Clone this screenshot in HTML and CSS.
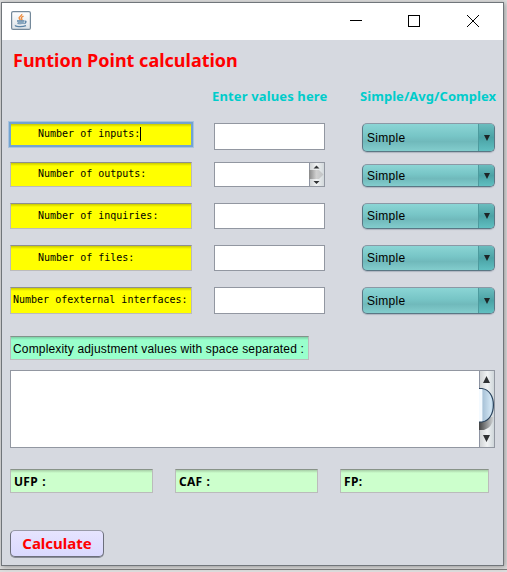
FILE: index.html
```html
<!DOCTYPE html>
<html lang="en">
<head>
<meta charset="utf-8">
<title>Funtion Point calculation</title>
<link rel="stylesheet" href="styles.css">
</head>
<body>
<main class="window">
  <header class="titlebar">
    <svg class="java" width="20" height="19" viewBox="0 0 20 19">
      <defs><linearGradient id="tile" x2="0" y2="1"><stop stop-color="#fff"/><stop offset="1" stop-color="#dce3e8"/></linearGradient></defs>
      <rect x=".6" y=".6" width="18.8" height="17.8" rx="1.5" fill="url(#tile)" stroke="#74899a" stroke-width="1.2"/>
      <path d="M10.8 3C11.5 5 7 5.5 8.2 7.5L9.5 9M12.5 5.2C9.5 6.5 10 7.2 11 8.2L10.5 9.5" fill="none" stroke="#ed8b3d" stroke-width="1.3"/>
      <path d="M6 10H13.5M6.5 12.2Q9.5 13.3 13 12M14 10.2Q16.2 10.3 13.5 12.7M4.5 14.2Q4 15 6 15.3Q11 16 15 14.6" fill="none" stroke="#5b84a6" stroke-width="1.3"/>
      <path d="M6.5 10.5H13L12 13H7.5Z" fill="#86a5bd"/>
    </svg>
    <svg class="controls" width="131" height="13" viewBox="0 0 131 13" fill="none" stroke="#000">
      <path d="M0 5.5H12"/><rect x="58.5" y=".5" width="11" height="11"/><path d="M117 0L129 12M129 0L117 12"/>
    </svg>
  </header>
  <section class="content">
    <h1>Funtion Point calculation</h1>
    <div class="grid">
      <h2 class="values">Enter values here</h2>
      <h2 class="levels">Simple/Avg/Complex</h2>

      <div class="label first focus">Number of inputs:<i class="caret"></i></div>
      <div class="input first"></div>
      <div class="combo"><span>Simple</span><b></b></div>

      <div class="label second">Number of outputs:</div>
      <div class="input scroll">
        <svg width="15" height="23" viewBox="0 0 15 23">
          <defs>
            <linearGradient id="track"><stop stop-color="#cdd0d2"/><stop offset=".5" stop-color="#f1f3f4"/><stop offset="1" stop-color="#d3d9dc"/></linearGradient>
            <linearGradient id="nub"><stop stop-color="#888"/><stop offset=".5" stop-color="#d0d0d0"/><stop offset="1" stop-color="#c0c3c5"/></linearGradient>
          </defs>
          <path fill="url(#track)" d="M0 0H15V23H0Z"/><path fill="#8e94a2" d="M0 0H1V23H0Z"/>
          <path d="M0 7H10L14.5 11.5L10 16H0Z" fill="url(#nub)"/>
          <path d="M7.5 2.5L10.5 5.5H4.5ZM4.5 18H10.5L7.5 21Z" fill="#303234"/>
        </svg>
      </div>
      <div class="combo short"><span>Simple</span><b></b></div>

      <div class="label low">Number of inquiries:</div>
      <div class="input"></div>
      <div class="combo"><span>Simple</span><b></b></div>

      <div class="label low">Number of files:</div>
      <div class="input"></div>
      <div class="combo"><span>Simple</span><b></b></div>

      <div class="label wide">Number ofexternal interfaces:</div>
      <div class="input tall"></div>
      <div class="combo tall"><span>Simple</span><b></b></div>
    </div>
    <div class="note">Complexity adjustment values with space separated :</div>
    <div class="area">
      <svg width="15" height="76" viewBox="0 0 15 76">
        <defs>
          <linearGradient id="rail"><stop stop-color="#cdd0d2"/><stop offset=".55" stop-color="#f1f3f4"/><stop offset="1" stop-color="#cfd6da"/></linearGradient>
          <linearGradient id="thumb"><stop stop-color="#f4faff"/><stop offset=".2" stop-color="#f4faff"/><stop offset=".27" stop-color="#a9c3d8"/><stop offset=".8" stop-color="#cfe3f2"/><stop offset="1" stop-color="#b8d4e8"/></linearGradient>
          <linearGradient id="shade"><stop stop-color="#444"/><stop offset="1" stop-color="#d5d8da"/></linearGradient>
        </defs>
        <path fill="url(#rail)" d="M0 0H15V76H0Z"/><path fill="#8e94a2" d="M0 0H1V76H0Z"/>
        <path d="M0 46H15Q13 57 5 59H0Z" fill="url(#shade)"/>
        <path d="M0 17.5H3C10 18.5 14.4 25 14.4 34S10 50 3 51H0Z" fill="url(#thumb)"/>
        <path d="M0 17.5H3C10 18.5 14.4 25 14.4 34S10 50 3 51H0" fill="none" stroke="#29425c" stroke-width="1.2"/>
        <path d="M7.5 5L11 12H4ZM4 64H11L7.5 71Z" fill="#303234"/>
      </svg>
    </div>
    <div class="results">
      <div class="result">UFP :</div>
      <div class="result">CAF :</div>
      <div class="result last">FP:</div>
    </div>
    <button class="calculate">Calculate</button>
  </section>
</main>
<div class="behind"></div>
</body>
</html>
```
FILE: styles.css
```css
* { box-sizing: border-box; }
body {
  margin: 0;
  width: 507px;
  height: 572px;
  overflow: hidden;
  padding: 2px 0 0 1px;
  background: #dedede;
}
.window {
  width: 503px;
  height: 564px;
  border: 1px solid #70757a;
  background: #d6d9e0;
  box-shadow: 1px 1px 5px #0005;
}
.titlebar {
  height: 37px;
  background: #fff;
  display: flex;
  justify-content: space-between;
  align-items: flex-start;
  padding: 8px 22px 0 9px;
}
.controls { margin-top: 4px; }
.content { padding: 0 8px; }
h1, h2, .result, .calculate {
  font-family: "Noto Sans", "DejaVu Sans", sans-serif;
  font-weight: bold;
}
h1 {
  margin: 0;
  padding: 8px 0 0 3px;
  height: 48px;
  font-size: 18px;
  line-height: 24px;
  color: #f00;
  white-space: nowrap;
}
.grid {
  display: grid;
  grid-template-columns: 204px 148px 133px;
  grid-template-rows: 35px 39px 41px 42px 42px 27px;
  align-items: start;
}
h2 { margin: 0; font-size: 13px; line-height: 17px; color: #00cccb; white-space: nowrap; }
.values { grid-column: 2; margin-left: -2px; letter-spacing: .14px; }
.levels { grid-column: 3; margin-left: -2px; letter-spacing: .05px; }
.label {
  width: 182px;
  height: 26px;
  padding-left: 27px;
  border: 1px solid #bbb;
  border-top-color: #8e8f91;
  background: linear-gradient(#c9c900, #ff0 3px);
  font: 10px/21px "DejaVu Sans Mono", monospace;
  white-space: pre;
  color: #000;
}
.label.second { height: 25px; }
.label.low { line-height: 23px; }
.label.wide { height: 27px; padding-left: 2px; line-height: 23px; }
.label.focus {
  height: 23px;
  line-height: 19px;
  border-color: #73a4d1;
  box-shadow: 0 0 0 1px #73a4d1, 0 0 0 2px #a9c3df;
}
.caret { display: inline-block; width: 1px; height: 14px; background: #000; vertical-align: -4px; }
.input {
  width: 111px;
  height: 26px;
  border: 1px solid #9297a1;
  background: #fff;
  display: flex;
  justify-content: flex-end;
}
.input.first, .input.tall { height: 27px; }
.input.scroll { height: 25px; }
.combo {
  width: 133px;
  height: 26px;
  border: 1px solid #5a7784;
  border-top-color: #8b98a5;
  border-radius: 5px;
  background: linear-gradient(#8bd5d5, #77c5c6 45%, #70b9bb 65%, #83cdcd);
  display: flex;
  align-items: center;
  overflow: hidden;
  box-shadow: 0 1px 1px #8a94a488;
  font: 12px "Liberation Sans", sans-serif;
}
.first + .combo { height: 29px; }
.combo.short { height: 23px; margin-top: 2px; }
.combo.tall { height: 27px; }
.combo span { flex: 1; padding-left: 4px; letter-spacing: .3px; }
.combo b {
  align-self: stretch;
  width: 16px;
  border-left: 1px solid #4d9b9e;
  background: linear-gradient(#6bbcbe, #4aa2a5 50%, #60bfc1);
  display: flex;
  align-items: center;
  justify-content: center;
}
.combo b::before { content: ""; border: 3.5px solid transparent; border-top: 6px solid #1d2526; border-bottom: 0; }
.note {
  width: 299px;
  height: 24px;
  margin-top: 22px;
  padding-left: 2px;
  border: 1px solid #bbb;
  border-top-color: #81938a;
  background: linear-gradient(#7dcfa6, #9fc 3px);
  font: 12px/24px "Liberation Sans", sans-serif;
  letter-spacing: .16px;
  white-space: nowrap;
}
.area {
  height: 78px;
  width: 485px;
  margin-top: 10px;
  border: 1px solid #9297a1;
  background: #fff;
  display: flex;
  justify-content: flex-end;
}
.results { display: flex; gap: 22px; margin-top: 21px; }
.result {
  width: 143px;
  height: 24px;
  padding-left: 3px;
  border: 1px solid #bbb;
  border-top-color: #889388;
  background: linear-gradient(#a6cea6, #cfc 3px);
  font-size: 12px;
  line-height: 23px;
  letter-spacing: .3px;
  word-spacing: .7px;
}
.result.last { width: 149px; }
.calculate {
  display: block;
  width: 94px;
  height: 27px;
  margin-top: 37px;
  padding: 0;
  border: 1px solid #6c6f7b;
  border-top-color: #989aa8;
  border-radius: 5px;
  background: linear-gradient(#e6e4ff, #dad9fe);
  box-shadow: 0 1px 0 #8a8e98;
  color: #f00;
  font-size: 15px;
  line-height: 25px;
}
.behind { height: 4px; margin-left: -1px; border-bottom: 1px solid #777; }
```
